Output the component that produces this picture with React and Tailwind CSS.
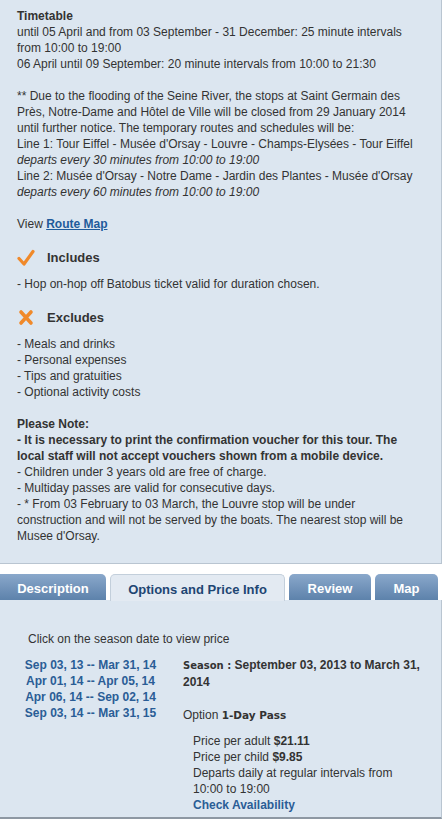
import { useState } from 'react';

const seasons = [
  'Sep 03, 13 -- Mar 31, 14',
  'Apr 01, 14 -- Apr 05, 14',
  'Apr 06, 14 -- Sep 02, 14',
  'Sep 03, 14 -- Mar 31, 15',
];

const tabs = [
  { label: 'Description', w: 'w-[106px]' },
  { label: 'Options and Price Info', w: 'w-[175px]' },
  { label: 'Review', w: 'w-[82px]' },
  { label: 'Map', w: 'w-[63px]' },
];

function CheckIcon() {
  return (
    <svg width="18" height="18" viewBox="0 0 18 18">
      <path d="M2 9.5 L7 15 L16 2.5" fill="none" stroke="#f0892a" strokeWidth="3.2" strokeLinecap="round" strokeLinejoin="round" />
    </svg>
  );
}

function CrossIcon() {
  return (
    <svg width="18" height="18" viewBox="0 0 18 18">
      <path d="M4 3 L14 14 M14 3 L4 14" fill="none" stroke="#f0892a" strokeWidth="3.6" strokeLinecap="round" />
    </svg>
  );
}

export default function App() {
  const [active, setActive] = useState(1);

  return (
    <div className="w-[446px] h-[821px] overflow-hidden bg-white text-[12px] leading-4 text-[#333333] font-['Liberation_Sans',Arial,sans-serif]">
      {/* Description panel */}
      <div className="w-[442px] h-[564px] bg-[#dce6f0] border-r border-b border-[#b9c5d1] pl-[17px] pr-[18px] pt-[8px]">
        <p className="font-bold">Timetable</p>
        <p>until 05 April and from 03 September - 31 December: 25 minute intervals from 10:00 to 19:00</p>
        <p>06 April until 09 September: 20 minute intervals from 10:00 to 21:30</p>

        <p className="mt-4">
          ** Due to the flooding of the Seine River, the stops at Saint Germain des Près, Notre-Dame and Hôtel de Ville will be closed from 29 January 2014 until further notice. The temporary routes and schedules will be:
        </p>
        <p className="whitespace-nowrap">Line 1: Tour Eiffel - Musée d'Orsay - Louvre - Champs-Elysées - Tour Eiffel</p>
        <p className="italic">departs every 30 minutes from 10:00 to 19:00</p>
        <p>Line 2: Musée d'Orsay - Notre Dame - Jardin des Plantes - Musée d'Orsay</p>
        <p className="italic">departs every 60 minutes from 10:00 to 19:00</p>

        <p className="mt-4">
          View <a href="#" className="font-bold text-[#1f5b9b] underline">Route Map</a>
        </p>

        <div className="mt-4 h-5 flex items-center">
          <span className="w-[30px] flex items-center"><CheckIcon /></span>
          <span className="text-[13px] font-bold">Includes</span>
        </div>
        <p className="mt-2">- Hop on-hop off Batobus ticket valid for duration chosen.</p>

        <div className="mt-4 h-5 flex items-center">
          <span className="w-[30px] flex items-center"><CrossIcon /></span>
          <span className="text-[13px] font-bold">Excludes</span>
        </div>
        <ul className="mt-2">
          <li>- Meals and drinks</li>
          <li>- Personal expenses</li>
          <li>- Tips and gratuities</li>
          <li>- Optional activity costs</li>
        </ul>

        <p className="mt-4 font-bold">Please Note:</p>
        <p className="font-bold">- It is necessary to print the confirmation voucher for this tour. The local staff will not accept vouchers shown from a mobile device.</p>
        <p>- Children under 3 years old are free of charge.</p>
        <p>- Multiday passes are valid for consecutive days.</p>
        <p>- * From 03 February to 03 March, the Louvre stop will be under construction and will not be served by the boats. The nearest stop will be Musee d'Orsay.</p>
      </div>

      {/* Tabs */}
      <div className="mt-[10px] flex items-end gap-[4px] h-[26px]">
        {tabs.map((t, i) =>
          i === active ? (
            <button
              key={t.label}
              onClick={() => setActive(i)}
              className={`${t.w} h-[27px] -mb-px pt-[3px] rounded-t-[5px] border border-b-0 border-[#c3cfdb] bg-[#e3eaf2] text-[13px] font-bold text-[#1e4673] relative z-10`}
            >
              {t.label}
            </button>
          ) : (
            <button
              key={t.label}
              onClick={() => setActive(i)}
              className={`${t.w} h-[26px] pt-[3px] rounded-t-[5px] bg-gradient-to-b from-[#8aa8cb] to-[#5d82ab] text-[13px] font-bold text-white ${i === 0 ? 'rounded-tl-none' : ''}`}
            >
              {t.label}
            </button>
          )
        )}
      </div>

      {/* Options panel */}
      <div className="w-[442px] h-[219px] bg-[#dce6f0] border-r border-[#b9c5d1] border-b-2 border-b-[#8e98a3] pt-[31px]">
        <p className="pl-[28px]">Click on the season date to view price</p>

        <div className="mt-[10px] flex">
          <ul className="w-[145px] ml-[18px] text-center font-bold text-[#2a5d96]">
            {seasons.map((s) => (
              <li key={s}>
                <a href="#">{s}</a>
              </li>
            ))}
          </ul>

          <div className="ml-[20px] w-[245px]">
            <p className="font-bold">
              <span className="font-['DejaVu_Sans',sans-serif] text-[10px]">Season :</span> September 03, 2013 to March 31, 2014
            </p>
            <p className="mt-[17px]">
              Option <span className="font-bold font-['DejaVu_Sans',sans-serif] text-[10.5px]">1-Day Pass</span>
            </p>
            <div className="mt-[10px] pl-[10px] w-[235px]">
              <p>Price per adult <b>$21.11</b></p>
              <p>Price per child <b>$9.85</b></p>
              <p>Departs daily at regular intervals from 10:00 to 19:00</p>
              <a href="#" className="font-bold text-[#2a5d96]">Check Availability</a>
            </div>
          </div>
        </div>
      </div>
    </div>
  );
}
